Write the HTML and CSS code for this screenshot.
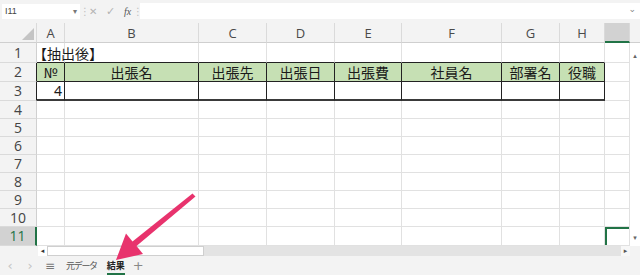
FILE: index.html
```html
<!DOCTYPE html>
<html lang="ja">
<head>
<meta charset="utf-8">
<title>結果</title>
<link rel="stylesheet" href="styles.css">
</head>
<body>
<div class="app">
  <div class="fbar">
    <div class="namebox"><span>I11</span><span class="dd">▾</span></div>
    <div class="sep">⋮</div>
    <div class="fbtns"><span class="fb-x">✕</span><span class="fb-ok">✓</span><span class="fb-fx">fx</span></div>
    <div class="sep">⋮</div>
    <div class="finput"><span class="exp">⌄</span></div>
  </div>
  <div class="sheet">
    <table class="grid">
      <colgroup>
        <col class="c-rh"><col class="c-a"><col class="c-b"><col class="c-c"><col class="c-d"><col class="c-e"><col class="c-f"><col class="c-g"><col class="c-h"><col class="c-i">
      </colgroup>
      <thead>
        <tr>
          <th class="corner"><svg class="tri" width="12" height="12" viewBox="0 0 12 12"><polygon points="12,0 12,12 0,12" fill="#c4c4c4"/></svg></th>
          <th>A</th><th>B</th><th>C</th><th>D</th><th>E</th><th>F</th><th>G</th><th>H</th><th class="sel-col"></th>
        </tr>
      </thead>
      <tbody>
        <tr class="h20">
          <th>1</th>
          <td class="t-left above">【抽出後】</td><td class="above"></td><td class="above"></td><td class="above"></td><td class="above"></td><td class="above"></td><td class="above"></td><td class="above"></td><td></td>
        </tr>
        <tr class="h19">
          <th class="edge">2</th>
          <td class="hd box">№</td><td class="hd box">出張名</td><td class="hd box">出張先</td><td class="hd box">出張日</td><td class="hd box">出張費</td><td class="hd box">社員名</td><td class="hd box">部署名</td><td class="hd box">役職</td><td></td>
        </tr>
        <tr class="h19">
          <th class="edge">3</th>
          <td class="box last num">4</td><td class="box last"></td><td class="box last"></td><td class="box last"></td><td class="box last"></td><td class="box last"></td><td class="box last"></td><td class="box last"></td><td></td>
        </tr>
        <tr class="h18"><th>4</th><td></td><td></td><td></td><td></td><td></td><td></td><td></td><td></td><td></td></tr>
        <tr class="h18"><th>5</th><td></td><td></td><td></td><td></td><td></td><td></td><td></td><td></td><td></td></tr>
        <tr class="h18"><th>6</th><td></td><td></td><td></td><td></td><td></td><td></td><td></td><td></td><td></td></tr>
        <tr class="h18"><th>7</th><td></td><td></td><td></td><td></td><td></td><td></td><td></td><td></td><td></td></tr>
        <tr class="h18"><th>8</th><td></td><td></td><td></td><td></td><td></td><td></td><td></td><td></td><td></td></tr>
        <tr class="h18"><th>9</th><td></td><td></td><td></td><td></td><td></td><td></td><td></td><td></td><td></td></tr>
        <tr class="h18"><th>10</th><td></td><td></td><td></td><td></td><td></td><td></td><td></td><td></td><td></td></tr>
        <tr class="h19"><th class="sel-row">11</th><td></td><td></td><td></td><td></td><td></td><td></td><td></td><td></td><td class="sel-cell"></td></tr>
      </tbody>
    </table>
    <div class="vscroll">
      <div class="vs-head"></div>
      <div class="vs-body"><span class="vs-up">▴</span><span class="vs-down">▾</span></div>
    </div>
  </div>
  <div class="hscroll">
    <div class="hs-pad"></div>
    <div class="hs-left">◂</div>
    <div class="hs-thumb"></div>
    <div class="hs-track"></div>
    <div class="hs-right">▸</div>
    <div class="hs-end"></div>
  </div>
  <div class="tabs">
    <span class="nav">‹</span>
    <span class="nav">›</span>
    <span class="menu">≡</span>
    <span class="tab">元データ</span>
    <span class="tab active">結果</span>
    <span class="plus">+</span>
  </div>
  <svg class="arrow" width="640" height="275" viewBox="0 0 640 275">
    <polygon points="116,260 143,254 136.5,246 195.5,196.5 192.5,193.5 132.5,241.5 126,233.5" fill="#e8336d"/>
  </svg>
</div>
</body>
</html>
```

FILE: styles.css
```css
html, body {
  margin: 0;
  padding: 0;
  background: #ffffff;
}

.app {
  position: relative;
  width: 640px;
  height: 275px;
  overflow: hidden;
  display: flex;
  flex-direction: column;
  background: #f3f3f3;
  font-family: "Noto Sans CJK JP", sans-serif;
}

/* formula bar */
.fbar {
  height: 23px;
  flex: none;
  display: flex;
  align-items: center;
  padding: 0 0 1px 2px;
  box-sizing: border-box;
  background: #f3f3f3;
}

.namebox {
  width: 78px;
  height: 15px;
  background: #ffffff;
  display: flex;
  align-items: center;
  justify-content: space-between;
  padding: 0 3px 0 3px;
  box-sizing: border-box;
  font: 9px "Liberation Sans", sans-serif;
  color: #444;
}

.dd {
  font-size: 8px;
  color: #777;
}

.sep {
  width: 5px;
  text-align: center;
  font: 10px "DejaVu Sans", sans-serif;
  color: #c0c0c0;
}

.fbtns {
  width: 48px;
  height: 15px;
  display: flex;
  align-items: center;
  font-family: "DejaVu Sans", sans-serif;
  color: #b4b4b4;
}

.fb-x {
  font-size: 10px;
  margin-left: 4px;
  width: 17px;
}

.fb-ok {
  font-size: 11px;
  width: 18px;
}

.fb-fx {
  font: italic 10px "Liberation Serif", serif;
  color: #555;
}

.finput {
  flex: 1;
  height: 16px;
  background: #ffffff;
  position: relative;
  display: flex;
  justify-content: flex-end;
  align-items: center;
  padding-right: 4px;
  margin-left: 2px;
}

.exp {
  font: 9px "DejaVu Sans", sans-serif;
  color: #888;
  line-height: 1;
  margin-top: -4px;
}

/* grid */
.sheet {
  flex: none;
  display: flex;
  background: #ffffff;
}

.grid {
  border-collapse: separate;
  border-spacing: 0;
  table-layout: fixed;
  width: 630px;
  background: #ffffff;
}

.c-rh { width: 37px; }
.c-a { width: 28px; }
.c-b { width: 134px; }
.c-c { width: 68px; }
.c-d { width: 68px; }
.c-e { width: 67px; }
.c-f { width: 100px; }
.c-g { width: 58px; }
.c-h { width: 45px; }
.c-i { width: 25px; }

.grid th,
.grid td {
  padding: 0;
  box-sizing: border-box;
  border-right: 1px solid #e1e1e1;
  border-bottom: 1px solid #e1e1e1;
  white-space: nowrap;
  overflow: visible;
  line-height: 14px;
}

.grid thead th {
  height: 20px;
  background: #f3f3f3;
  font: 13px/14px "Open Sans", sans-serif;
  color: #4a4a4a;
  font-weight: normal;
  text-align: center;
  border-right: 1px solid #dadada;
  border-bottom: 1px solid #cfcfcf;
  vertical-align: middle;
}

.grid thead th.corner {
  position: relative;
  text-align: right;
  vertical-align: bottom;
  padding: 0 2px 2px 0;
  line-height: 0;
}

.grid thead th.sel-col {
  background: #d2d2d2;
  border-bottom: 2px solid #217346;
}

.grid tbody th {
  background: #f3f3f3;
  font: 14px/14px "Open Sans", sans-serif;
  color: #444;
  font-weight: normal;
  text-align: center;
  border-right: 1px solid #d0d0d0;
  border-bottom: 1px solid #dadada;
}

.grid tbody th.edge {
  border-right-color: #222;
}

.grid tbody th.sel-row {
  background: #d2d2d2;
  color: #217346;
  border-right: 2px solid #217346;
}

.h20 th, .h20 td { height: 20px; }
.h19 th, .h19 td { height: 19px; }
.h18 th, .h18 td { height: 18px; }

.grid td {
  font-size: 14px;
  color: #1a1a1a;
  text-align: center;
}

.grid td.t-left {
  text-align: left;
  text-indent: -4px;
}

.grid td.above {
  border-bottom-color: #222;
}

.grid td.box {
  border-right-color: #222;
  border-bottom-color: #222;
}

.grid td.last {
  border-bottom: 2px solid #3a3a3a;
}

.grid td.hd {
  background: #c6e0b4;
}

.grid td.num {
  text-align: right;
  padding-right: 2px;
  font-family: "Noto Sans", sans-serif;
}

.grid td.sel-cell {
  box-shadow: inset 2px 2px 0 #217346;
}

/* vertical scrollbar */
.vscroll {
  width: 10px;
  display: flex;
  flex-direction: column;
}

.vs-head {
  height: 20px;
  background: #f3f3f3;
  border-bottom: 1px solid #cfcfcf;
  box-sizing: border-box;
}

.vs-body {
  flex: 1;
  background: #ffffff;
  display: flex;
  flex-direction: column;
  justify-content: space-between;
  align-items: center;
  font: 7px/8px "DejaVu Sans", sans-serif;
  color: #666;
  padding: 9px 0 4px;
  box-sizing: border-box;
}

/* horizontal scrollbar */
.hscroll {
  height: 10px;
  flex: none;
  display: flex;
  background: #f3f3f3;
}

.hs-pad {
  width: 38px;
}

.hs-left,
.hs-right {
  width: 9px;
  background: #ffffff;
  font: 7px "DejaVu Sans", sans-serif;
  color: #333;
  display: flex;
  align-items: center;
  justify-content: center;
}

.hs-right {
  background: #f7f7f7;
  color: #555;
}

.hs-thumb {
  width: 157px;
  background: #ffffff;
  border: 1px solid #cfcfcf;
  box-sizing: border-box;
}

.hs-track {
  flex: 1;
  background: #e3e3e3;
}

.hs-end {
  width: 10px;
  background: #f3f3f3;
}

/* sheet tabs */
.tabs {
  flex: 1;
  min-height: 0;
  display: flex;
  align-items: center;
  background: #f3f3f3;
  font-size: 9px;
  color: #555;
}

.nav {
  width: 20px;
  text-align: center;
  font: 13px/16px "DejaVu Sans", sans-serif;
  color: #c4c4c4;
}

.menu {
  width: 20px;
  text-align: center;
  font: 12px/16px "DejaVu Sans", sans-serif;
  color: #777;
}

.tab {
  margin-left: 6px;
  position: relative;
  height: 20px;
  line-height: 20px;
  letter-spacing: -1.3px;
}

.tab.active {
  margin-left: 10px;
  color: #222;
  font-weight: bold;
  letter-spacing: 0;
}

.tab.active::after {
  content: "";
  position: absolute;
  left: 0;
  right: 0;
  bottom: 0;
  height: 3px;
  background: #217346;
}

.plus {
  margin-left: 8px;
  font: 13px/16px "DejaVu Sans", sans-serif;
  color: #888;
}

.arrow {
  position: absolute;
  left: 0;
  top: 0;
  pointer-events: none;
}
```
